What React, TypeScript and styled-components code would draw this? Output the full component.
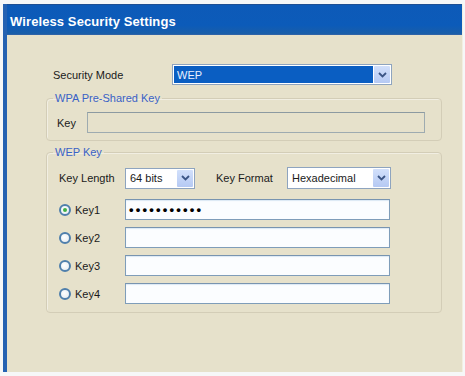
import React from "react";
import styled, { createGlobalStyle } from "styled-components";

const Global = createGlobalStyle`
  html, body { margin: 0; padding: 0; background: #f6f7f8; }
  body { font-family: "Liberation Sans", Arial, sans-serif; font-size: 11px; color: #111; }
`;

const Window = styled.div`
  box-sizing: border-box;
  margin: 4px 0 0 3px;
  width: 460px;
  height: 368px;
  background: #e6e1cb;
  border-left: 4px solid #2562b2;
  border-right: 1px solid #f2efe2;
  box-shadow: 0 2px 0 #b9b9b6;
  display: flex;
  flex-direction: column;
`;

const TitleBar = styled.div`
  height: 31px;
  box-sizing: border-box;
  padding: 9px 0 0 3px;
  background: linear-gradient(#0d5ab8, #0c5bb9 70%, #1a5ea8);
  border-top: 1px solid #1d4f94;
  border-bottom: 1px solid #2d62a8;
  color: #fff;
  font-weight: bold;
  font-size: 13px;
  letter-spacing: 0.1px;
  line-height: 15px;
`;

const Content = styled.div`
  padding: 29px 0 0 39px;
  display: flex;
  flex-direction: column;
`;

const Row = styled.div<{ $indent?: number; $gap?: number }>`
  display: flex;
  align-items: center;
  margin-left: ${(p) => p.$indent ?? 0}px;
  margin-top: ${(p) => p.$gap ?? 0}px;
`;

const Label = styled.span<{ $w: number; $offset?: number }>`
  width: ${(p) => p.$w}px;
  margin-left: ${(p) => p.$offset ?? 0}px;
  flex: none;
  white-space: nowrap;
  color: #1a1a1a;
`;

const Group = styled.fieldset<{ $pad: string; $top?: number }>`
  box-sizing: border-box;
  width: 396px;
  margin: ${(p) => p.$top ?? 0}px 0 0 0;
  padding: ${(p) => p.$pad};
  border: 1px solid #d3cdb7;
  border-radius: 4px;
  box-shadow: inset 1px 1px 0 #f1eee2;
  min-width: 0;
`;

const Legend = styled.legend<{ $shift: number }>`
  padding: 0 2px;
  margin-left: ${(p) => p.$shift}px;
  color: #3a62c6;
  line-height: 13px;
`;

const Select = styled.div<{ $w: number; $h?: number }>`
  box-sizing: border-box;
  width: ${(p) => p.$w}px;
  height: ${(p) => p.$h ?? 21}px;
  border: 1px solid #8ea4bf;
  background: #fff;
  display: flex;
  align-items: stretch;
  padding: 1px;
  flex: none;
`;

const SelectText = styled.div<{ $selected?: boolean }>`
  flex: 1;
  display: flex;
  align-items: center;
  padding-left: 3px;
  background: ${(p) => (p.$selected ? "#0a5ec2" : "transparent")};
  color: ${(p) => (p.$selected ? "#e8f0ff" : "#1a1a1a")};
`;

const DropButton = styled.div`
  width: 16px;
  flex: none;
  display: flex;
  align-items: center;
  justify-content: center;
  background: linear-gradient(#d2e0fb, #b5c9f3);
  border-radius: 1px;
  margin-left: 1px;
`;

const Field = styled.div<{ $w: number; $disabled?: boolean }>`
  box-sizing: border-box;
  width: ${(p) => p.$w}px;
  height: 21px;
  flex: none;
  border: 1px solid ${(p) => (p.$disabled ? "#9eabb0" : "#7f9db9")};
  border-top-color: ${(p) => (p.$disabled ? "#8c9aa1" : "#7894b0")};
  background: ${(p) => (p.$disabled ? "#e6e1cb" : "#fbfdff")};
  box-shadow: ${(p) => (p.$disabled ? "none" : "inset 0 1px 1px #dbe8f4")};
  display: flex;
  align-items: center;
  padding-left: 3px;
`;

const Dots = styled.span`
  font-size: 13px;
  letter-spacing: 2.2px;
  font-weight: bold;
  color: #000;
`;

const Radio = styled.span<{ $checked?: boolean }>`
  box-sizing: border-box;
  width: 12px;
  height: 12px;
  border-radius: 50%;
  border: 2px solid #4f7fac;
  background: radial-gradient(circle at 40% 40%, #ffffff, #e3e9ef);
  display: inline-flex;
  align-items: center;
  justify-content: center;
  margin-right: 4px;
  &::after {
    content: "";
    width: 4px;
    height: 4px;
    border-radius: 50%;
    background: ${(p) => (p.$checked ? "#3fb046" : "transparent")};
  }
`;

const RadioLabel = styled.label`
  display: flex;
  align-items: center;
  width: 66px;
  flex: none;
  color: #1a1a1a;
`;

const Chevron = () => (
  <svg width="9" height="6" viewBox="0 0 9 6">
    <path d="M1 1 L4.5 4.5 L8 1" fill="none" stroke="#3b5585" strokeWidth="1.8" />
  </svg>
);

const keys = ["Key1", "Key2", "Key3", "Key4"];

export default function App() {
  return (
    <>
      <Global />
      <Window>
        <TitleBar>Wireless Security Settings</TitleBar>
        <Content>
          <Row $indent={7}>
            <Label $w={119}>Security Mode</Label>
            <Select $w={220}>
              <SelectText $selected>WEP</SelectText>
              <DropButton>
                <Chevron />
              </DropButton>
            </Select>
          </Row>
          <Group $pad="7px 10px 7px 10px" $top={7}>
            <Legend $shift={-4}>WPA Pre-Shared Key</Legend>
            <Row>
              <Label $w={30}>Key</Label>
              <Field $w={338} $disabled />
            </Row>
          </Group>
          <Group $pad="8px 10px 8px 12px" $top={5}>
            <Legend $shift={-6}>WEP Key</Legend>
            <Row>
              <Label $w={66}>Key Length</Label>
              <Select $w={70}>
                <SelectText>64 bits</SelectText>
                <DropButton>
                  <Chevron />
                </DropButton>
              </Select>
              <Label $w={71} $offset={21}>Key Format</Label>
              <Select $w={104} $h={22}>
                <SelectText>Hexadecimal</SelectText>
                <DropButton>
                  <Chevron />
                </DropButton>
              </Select>
            </Row>
            {keys.map((k, i) => (
              <Row key={k} $gap={i === 0 ? 10 : 7}>
                <RadioLabel>
                  <Radio $checked={i === 0} />
                  {k}
                </RadioLabel>
                <Field $w={265}>{i === 0 ? <Dots>•••••••••••</Dots> : null}</Field>
              </Row>
            ))}
          </Group>
        </Content>
      </Window>
    </>
  );
}
